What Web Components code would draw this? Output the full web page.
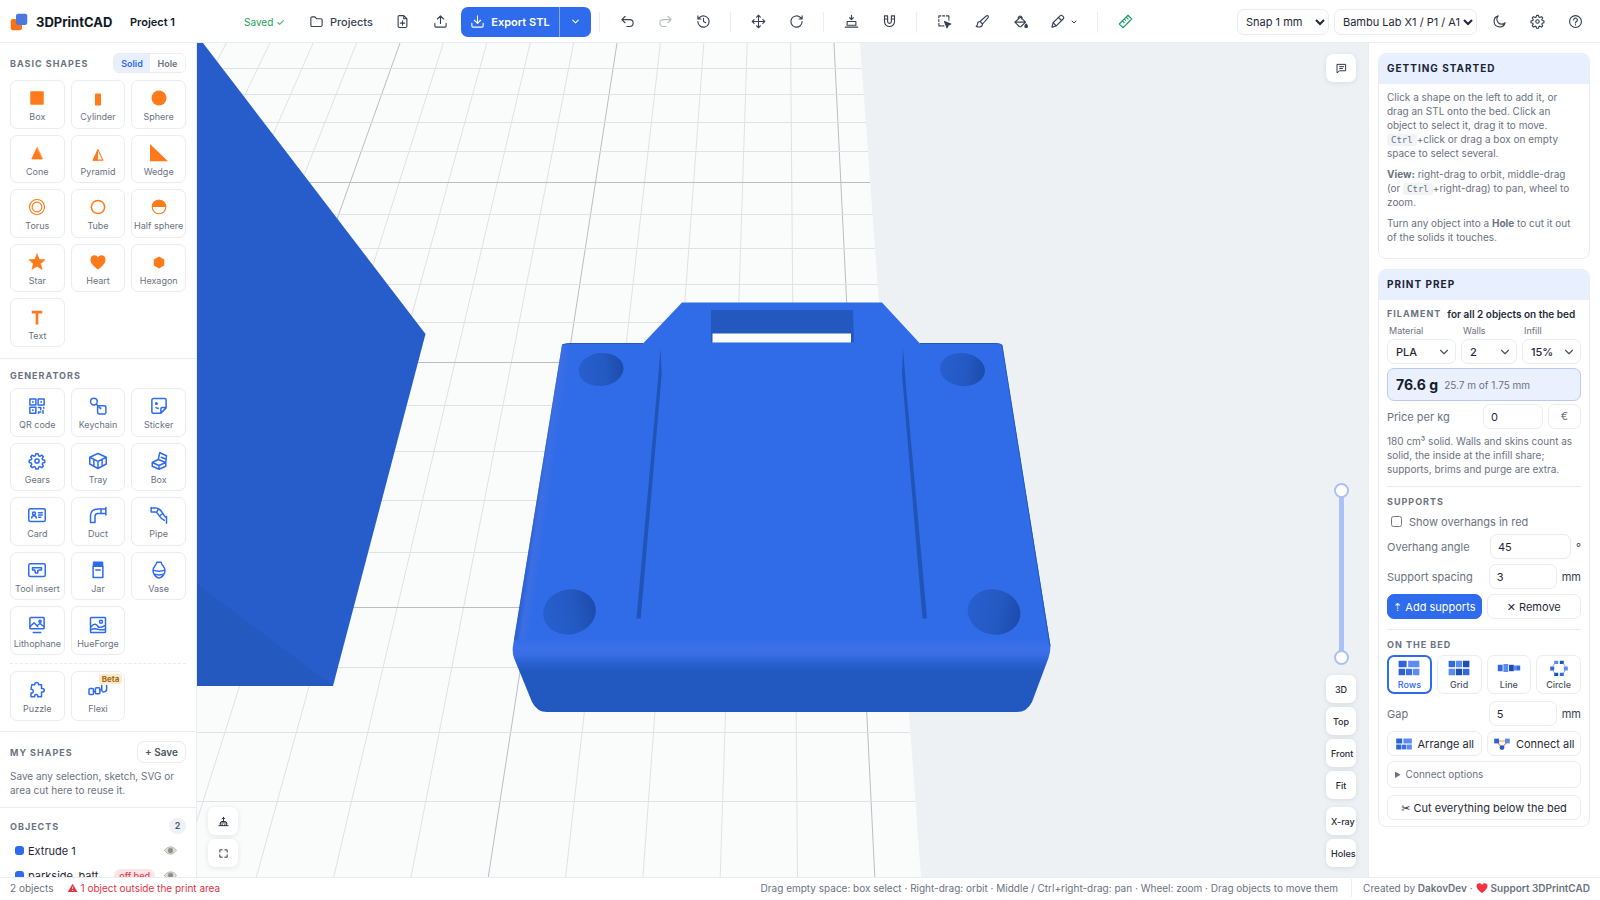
<!DOCTYPE html>
<html lang="en">
<head>
<meta charset="utf-8">
<title>3DPrintCAD</title>
<style>
html,body{margin:0;height:100%}
body{font-family:Inter,"DejaVu Sans",sans-serif;font-size:11px;color:#1f2937;background:#fff;overflow:hidden;
 --accent:#2f6bed;--line:#e9ecf1;--muted:#6b7280;--soft:#e8effe;--orange:#ff7a1a}
</style>
</head>
<body>
<cad-app></cad-app>
<script>
const ICONS={
folder:'<path d="M3 6.500a2 2 0 0 1 2-2h4.500l2.500 3H19a2 2 0 0 1 2 2V18a2 2 0 0 1-2 2H5a2 2 0 0 1-2-2z"/>',
fileplus:'<path d="M14 2.500H7a2 2 0 0 0-2 2v15a2 2 0 0 0 2 2h10a2 2 0 0 0 2-2v-12z M14 2.500v5h5 M12 11v7 M8.500 14.500h7"/>',
upload:'<path d="M12 15V3 M7 8l5-5 5 5 M3 15v4a2 2 0 0 0 2 2h14a2 2 0 0 0 2-2v-4"/>',
download:'<path d="M12 3v12 M7 10l5 5 5-5 M3 15v4a2 2 0 0 0 2 2h14a2 2 0 0 0 2-2v-4"/>',
chevron:'<path d="M6 9l6 6 6-6"/>',
undo:'<path d="M8 14L3 9l5-5 M3 9h12.500a5.500 5.500 0 0 1 0 11H11"/>',
redo:'<path d="M16 14l5-5-5-5 M21 9H8.500a5.500 5.500 0 0 0 0 11H13"/>',
history:'<path d="M3 12a9 9 0 1 0 2.700-6.400L3 8 M3 3v5h5 M12 7v5l3.500 2"/>',
move:'<path d="M12 2v20 M2 12h20 M9 5l3-3 3 3 M9 19l3 3 3-3 M5 9l-3 3 3 3 M19 9l3 3-3 3"/>',
rotate:'<path d="M21 12a9 9 0 1 1-2.700-6.400L21 8 M21 3v5h-5"/>',
place:'<path d="M2 21h20 M5 12h14v6H5z M12 2v7 M9 6l3 3 3-3"/>',
magnet:'<path d="M4 3h5v9a3 3 0 0 0 6 0V3h5v9a8 8 0 0 1-16 0z M4 8h5 M15 8h5"/>',
select:'<path d="M3 6V3h3 M9 3h3 M15 3h4v4 M19 9v1 M3 9v3 M3 15v4h4 M9 19h2"/><path d="M12 12l10 4-4 2-2 4z" fill="currentColor"/>',
brush:'<path d="M21 3c1 1 0 3-1 4l-8 9-4-4 9-8c1-1 3-2 4-1z M8 12c-3 0-4 2-4 4s-1 3-2 4c3 1 10 2 10-4"/>',
bucket:'<path d="M3 13L12 5l8 8-7 7a2 2 0 0 1-3 0z M4 13h15 M9 8a3 3 0 1 1 5 0"/><path d="M21 16s2 2 2 4a2 2 0 0 1-4 0c0-2 2-4 2-4z" fill="currentColor"/>',
pen:'<path d="M3 21l2-7L16 3a2.500 2.500 0 0 1 4 0l1 1a2.500 2.500 0 0 1 0 4L10 19z M14 6l4 4 M5 14l5 5"/>',
ruler:'<path d="M16 2l6 6L8 22l-6-6z M13 5l3 3 M10 8l2 2 M7 11l3 3"/>',
moon:'<path d="M21 14a9 9 0 1 1-11-11 7.500 7.500 0 0 0 11 11z"/>',
gear:'<path d="M9.800 5l.700-2.800h3l.700 2.800 1.600.700 2.500-1.500 2.100 2.100-1.500 2.500.700 1.600 2.700.600v3l-2.700.700-.700 1.600 1.500 2.500-2.100 2.100-2.500-1.500-1.600.700-.700 2.700h-3l-.700-2.700-1.600-.700-2.500 1.500-2.100-2.100 1.500-2.500-.700-1.600-2.800-.700v-3l2.800-.600.700-1.600-1.500-2.500 2.100-2.100 2.500 1.500z"/><circle cx="12" cy="12" r="2.800"/>',
help:'<circle cx="12" cy="12" r="9.500"/><path d="M9 9.500a3 3 0 1 1 4.300 2.700c-1 .500-1.300 1-1.300 2 M12 17v.500"/>',
chat:'<path d="M3 3h18v14H8l-5 4z M8 8h9 M8 12h6"/>',
place2:'<path d="M2 21h20 M5 21v-6h14v6 M5 15l2-3h10l2 3 M12 12V3 M9 6l3-3 3 3 M9 21v-3 M15 21v-3"/>',
full:'<path d="M4 9V4h5 M15 4h5v5 M20 15v5h-5 M9 20H4v-5"/>',
box:'<rect x="3" y="3" width="18" height="18" rx="1.500" fill="currentColor" stroke="none"/>',
cylinder:'<rect x="8" y="6" width="8" height="16" rx="1" fill="currentColor" stroke="none"/>',
sphere:'<circle cx="12" cy="12" r="10" fill="currentColor" stroke="none"/>',
cone:'<path d="M12 5L5 20h14z" fill="currentColor" stroke-width="1"/>',
pyramid:'<path d="M12 7.500L5.500 21.500h13z" stroke-width="1.500"/><path d="M12 7L5 22h7z" fill="currentColor" stroke="none"/>',
wedge:'<path d="M0 0v23h24z" fill="currentColor" stroke="none"/>',
torus:'<circle cx="12" cy="12" r="10" stroke-width="1.500"/><circle cx="12" cy="12" r="6.500" stroke-width="1.500"/>',
tube:'<circle cx="12" cy="12" r="8.800"/>',
half:'<circle cx="12" cy="12" r="9" stroke-width="1.500"/><path d="M2.300 12a9.700 9.700 0 0 1 19.400 0z" fill="currentColor" stroke="none"/>',
star:'<path d="M12 1.500l3 7.300 7.500.200-5.800 5.300 2.100 7.500L12 17.700l-6.800 4.100 2.100-7.500L1.500 9l7.500-.200z" fill="currentColor" stroke-width="1"/>',
heart:'<path d="M12 22C5 17 2 13 2 9 2 2 10 1.500 12 6c2-4.500 10-4 10 3 0 4-3 8-10 13z" fill="currentColor" stroke="none"/>',
hexagon:'<path d="M12 4.500l7 4v8l-7 4-7-4v-8z" fill="currentColor" stroke="none"/>',
text:'<path d="M5 5.500h14 M12 5.500V22" stroke-width="3.500" stroke-linecap="butt"/>',
qr:'<path d="M2.500 2.500h8v8h-8z M13.500 2.500h8v8h-8z M2.500 13.500h8v8h-8z M14 14h3v3 M21 14v1 M17 20h-3v1.500 M20 18v3.500 M6.500 6v1 M17.500 6v1 M6.500 17v1"/>',
keychain:'<circle cx="6.500" cy="6" r="4.500"/><rect x="11.500" y="11.500" width="11" height="11" rx="2"/><path d="M9.700 9.700l5.300 5.300 M15.500 14.500v1"/>',
sticker:'<path d="M4.500 2h15a2 2 0 0 1 2 2v10.500l-7 7h-10a2 2 0 0 1-2-2V4a2 2 0 0 1 2-2z M21 14h-4.500a2 2 0 0 0-2 2v5 M8.500 8.500v.500 M8 14c1 1 2 1.300 3 1"/><circle cx="8.500" cy="8.700" r="1" fill="currentColor"/>',
tray:'<path d="M12 2l11 5-11 5.500L1 7z M1 7v9l11 6 11-6V7 M12 12.500V22 M6.500 10v9 M17.500 10v9"/>',
openbox:'<path d="M3 14l8-4 10 4-9 4z M3 14v5l9 4 9-4v-5 M12 18v5 M11 10l2-9 9 4-1 9 M15 7l5 2"/>',
card:'<rect x="1" y="3.500" width="22" height="17" rx="2"/><circle cx="8" cy="10" r="2"/><path d="M5 16c0-4 6-4 6 0 M14 9h5 M14 12h5 M14 15h3"/>',
duct:'<path d="M2 22V13C2 7 6 4 12 4h10 M8 22v-8c0-3 2-4 4-4h10 M2 22h6 M22.500 2v10 M16 4v6"/>',
pipe:'<path d="M1.500 2v6 M1.500 2.500h6c9 0 8 9 14 13 M2 8h5c5 0 5 9 12 11 M22 14v9 M11 4l-2 4 M17 10l-4 3"/>',
insert:'<rect x="1" y="3.500" width="22" height="17" rx="2"/><path d="M6 9h12v3h-3l-2 1v3h-3l-1-4H6z"/>',
jar:'<path d="M6 1.500h12V7H6z" fill="currentColor"/><path d="M5.500 7h13v15h-13z M9 12h6"/>',
vase:'<path d="M9 1.500h6c0 4 5 6 5 11s-4 10-8 10-8-5-8-10 5-7 5-11z M4.500 12c3 2 12 2 15 0 M5.500 17c3 2 10 2 13 0"/>',
litho:'<rect x="2.500" y="2" width="19" height="15" rx="1"/><path d="M3 14l5-5 5 5 M12 13l4-3 5 4 M7 22h10"/><circle cx="16" cy="7" r="1.500"/>',
hue:'<rect x="2" y="2" width="20" height="20" rx="1"/><path d="M3 14c4-5 7-3 9 0s6 0 9-1 M3 18c6-3 10 2 18 0"/><circle cx="16" cy="7.500" r="2"/>',
puzzle:'<path d="M5 5h4c-1-4 6-4 5 0h4v5c5-1 5 5 0 5v6h-5c1-4-5-4-4 0H4v-5c4 1 4-5 0-5z"/>',
flexi:'<rect x="0" y="10" width="6" height="8" rx="1.500"/><rect x="8.500" y="9" width="6" height="8" rx="1.500"/><path d="M17 6v6c0 4 6.500 3 6.500-1V6 M6 14h2.500 M14.500 12H17"/>',
eye:'<path d="M1 12c5-9 17-9 22 0-5 9-17 9-22 0z" fill="#deded8" stroke="#b0b1ad" stroke-width="1.500"/><circle cx="12" cy="12" r="4" fill="#8b8c88" stroke="#9a988f"/>',
love:'<path d="M12 22C4 16 1 12 1 8 1 1 10 1 12 6c2-5 11-5 11 2 0 4-3 8-11 14z" fill="#ef3340" stroke="none"/>',
logo:'<rect x="1" y="8" width="15" height="15" rx="3" fill="#f97316" stroke="none"/><rect x="8" y="1" width="15" height="15" rx="3" fill="#4a78e0" stroke="none"/>'
};
const BASE='*{box-sizing:border-box}button,input,select{font:inherit;color:inherit;margin:0}button{cursor:pointer}h2,h3,p{margin:0;font:inherit}';
// init fills the cloned fragment before it is attached, so nested elements see their attributes.
function define(name,html,init){
  const t=document.createElement('template');
  t.innerHTML='<style>'+BASE+'</style>'+html;
  customElements.define(name,class extends HTMLElement{
    connectedCallback(){
      if(this.shadowRoot)return;
      const f=t.content.cloneNode(true);
      if(init)init.call(this,f);
      this.attachShadow({mode:'open'}).append(f);
    }
  });
}
define('cad-icon','<style>:host{display:inline-flex;width:var(--s,16px);height:var(--s,16px);flex:none}svg{width:100%;height:100%;fill:none;stroke:currentColor;stroke-width:var(--w,2);stroke-linecap:round;stroke-linejoin:round;overflow:visible}</style><svg viewBox="0 0 24 24" aria-hidden="true"></svg>',
 function(r){r.querySelector('svg').innerHTML=ICONS[this.getAttribute('name')]});

define('tool-button',`<style>:host{display:block}button{width:38px;height:30px;display:grid;place-items:center;border:0;background:none;color:inherit;padding:0;border-radius:6px}:host([faded]) button{opacity:.35}</style><button><cad-icon></cad-icon></button>`,
 function(r){r.querySelector('cad-icon').setAttribute('name',this.getAttribute('icon'));r.querySelector('button').setAttribute('aria-label',this.getAttribute('label'))});

define('top-bar',`<style>
:host{display:flex;align-items:center;height:43px;box-sizing:border-box;border-bottom:1px solid var(--line);padding:1px 6px 0 10px;color:#374151;--s:15px;--w:1.8}
.brand{display:flex;align-items:center;gap:8px;width:109px;font-weight:700;font-size:13px;color:#111827;--s:18px}
input{border:0;background:none;font-weight:600;font-size:11px;color:#111827;width:96px;padding:0;margin:0 18px 0 11px;outline:0}
.saved{font-size:10px;color:#22a157;width:57px}
.proj{display:flex;align-items:center;gap:6px;border:0;background:none;padding:0 8px;width:82px;height:30px;font-size:11px;font-weight:500}
.export{display:flex;height:30px;border-radius:7px;overflow:hidden;background:var(--accent);color:#fff;margin-left:2px}
.export button{border:0;background:none;color:#fff;display:flex;align-items:center;justify-content:center;padding:0}
.export button:first-child{width:99px;gap:6px;font-weight:600;font-size:11px;border-right:1px solid #84a9f5}
.export button:last-child{width:31px;--s:11px;--w:2.500}
i{width:1px;height:20px;background:var(--line);margin:0 8px;flex:none}
.pen{display:flex;align-items:center;justify-content:center;width:50px;height:30px;gap:5px;border:0;background:none;padding:0}
.pen cad-icon:last-child{--s:8px;--w:3}
.right{margin-left:auto;display:flex;align-items:center}
select{height:26px;border:1px solid var(--line);border-radius:7px;background:#fff;color:#1f2937;font-size:11px;padding:0 0 0 4px;margin-right:5px}
.snap{width:92px}.printer{width:143px;margin-right:3px}
.ruler{color:#22a06b}
</style>
<div class="brand"><cad-icon name="logo"></cad-icon><span>3DPrintCAD</span></div>
<input aria-label="Project name" value="Project 1">
<span class="saved">Saved ✓</span>
<button class="proj"><cad-icon name="folder"></cad-icon>Projects</button>
<tool-button icon="fileplus" label="New project"></tool-button>
<tool-button icon="upload" label="Import"></tool-button>
<div class="export"><button><cad-icon name="download"></cad-icon>Export STL</button><button aria-label="Export options"><cad-icon name="chevron"></cad-icon></button></div>
<i></i><tool-button icon="undo" label="Undo"></tool-button><tool-button icon="redo" label="Redo" faded></tool-button><tool-button icon="history" label="History"></tool-button>
<i></i><tool-button icon="move" label="Move"></tool-button><tool-button icon="rotate" label="Rotate"></tool-button>
<i></i><tool-button icon="place" label="Place on bed"></tool-button><tool-button icon="magnet" label="Snap faces"></tool-button>
<i></i><tool-button icon="select" label="Select area"></tool-button><tool-button icon="brush" label="Paint"></tool-button><tool-button icon="bucket" label="Fill"></tool-button>
<button class="pen" aria-label="Sketch"><cad-icon name="pen"></cad-icon><cad-icon name="chevron"></cad-icon></button>
<i></i><tool-button class="ruler" icon="ruler" label="Measure"></tool-button>
<div class="right"><select class="snap" aria-label="Snap"><option>Snap 1 mm</option></select><select class="printer" aria-label="Printer"><option>Bambu Lab X1 / P1 / A1</option></select>
<tool-button icon="moon" label="Dark mode"></tool-button><tool-button icon="gear" label="Settings"></tool-button><tool-button icon="help" label="Help"></tool-button></div>`);

define('shape-tile',`<style>:host{display:block;position:relative;min-width:0}button{width:100%;height:100%;border:1px solid var(--line);border-radius:7px;background:#fff;padding:4px 0 0;display:flex;flex-direction:column;align-items:center;justify-content:center;gap:4px;font-size:9px;line-height:12px;color:var(--muted);white-space:nowrap}
cad-icon{color:var(--tile-color);--s:18px}
b{position:absolute;top:3px;right:3px;font-size:8px;line-height:10px;padding:0 3px;background:#fdebc8;color:#a8671c;border-radius:3px}b:empty{display:none}</style>
<button><cad-icon></cad-icon><span><slot></slot></span></button><b></b>`,
 function(r){r.querySelector('cad-icon').setAttribute('name',this.getAttribute('icon'));r.querySelector('b').textContent=this.getAttribute('badge')||''});

define('panel-section',`<style>:host{display:block;padding:10px 10px 0;border-bottom:1px solid var(--line)}header{display:flex;align-items:center;justify-content:space-between;height:20px}h2{font-size:9px;font-weight:700;letter-spacing:1px;color:var(--muted);white-space:nowrap}</style>
<header><h2></h2><slot name="action"></slot></header><slot></slot>`,function(r){r.querySelector('h2').textContent=this.getAttribute('heading')});

define('object-row',`<style>:host{display:flex;align-items:center;height:25px;padding:0 9px 0 5px;font-size:11px;color:#1f2937}
i{width:9px;height:9px;border-radius:3px;background:var(--accent);margin-right:4px}span{flex:1;width:0;overflow:hidden;text-overflow:clip;white-space:nowrap}
em{font-style:normal;font-size:9px;font-weight:500;color:#dc3a4c;background:#fde5e7;border-radius:8px;padding:1px 5px;margin:0 9px 0 15px}em:empty{display:none}button{border:0;background:none;padding:0;--s:13px;display:flex}</style>
<i></i><span><slot></slot></span><em></em><button aria-label="Toggle visibility"><cad-icon name="eye"></cad-icon></button>`,
 function(r){r.querySelector('em').textContent=this.getAttribute('note')||''});

const tiles=s=>s.split(',').map(x=>{const[i,n,b]=x.split(':');return `<shape-tile icon="${i}"${b?` badge="${b}"`:''}>${n}</shape-tile>`}).join('');
define('shape-panel',`<style>
:host{display:block;box-sizing:border-box;width:197px;border-right:1px solid var(--line);overflow:hidden;background:#fff}
.grid{display:grid;grid-template-columns:repeat(3,1fr);grid-auto-rows:1fr;gap:6px;height:267px;margin:7px 0 11px}
.basic{--tile-color:var(--orange)}.gen{--tile-color:var(--accent);padding-top:6px}
.gen .grid{margin:3px 0 8px}
.gen .grid.more{height:50px;margin:0 0 10px}
hr{border:0;border-top:1px dashed var(--line);margin:0 0 7px}
.seg{display:flex;height:20px;border:1px solid var(--line);border-radius:6px;overflow:hidden}
.seg button{border:0;background:#fff;font-size:9px;font-weight:600;color:var(--muted);width:35px;padding:0}
.seg button:first-child{background:var(--soft);color:var(--accent);width:36px}
.save{height:22px;width:49px;padding:0;border:1px solid var(--line);border-radius:7px;background:#fff;font-size:10px;font-weight:600;color:#4b5563}
p{font-size:10px;line-height:14px;color:var(--muted);padding:7px 0 10px;white-space:nowrap}
.count{font-size:9px;font-weight:600;background:#eef2f8;color:#4b5563;width:17px;line-height:16px;border-radius:8px;text-align:center}
.objects{border:0;padding-top:8px}
.rows{padding-top:2px}
</style>
<panel-section class="basic" heading="BASIC SHAPES"><div class="seg" slot="action"><button>Solid</button><button>Hole</button></div>
<div class="grid">${tiles('box:Box,cylinder:Cylinder,sphere:Sphere,cone:Cone,pyramid:Pyramid,wedge:Wedge,torus:Torus,tube:Tube,half:Half sphere,star:Star,heart:Heart,hexagon:Hexagon,text:Text')}</div></panel-section>
<panel-section class="gen" heading="GENERATORS">
<div class="grid">${tiles('qr:QR code,keychain:Keychain,sticker:Sticker,gear:Gears,tray:Tray,openbox:Box,card:Card,duct:Duct,pipe:Pipe,insert:Tool insert,jar:Jar,vase:Vase,litho:Lithophane,hue:HueForge')}</div><hr>
<div class="grid more">${tiles('puzzle:Puzzle,flexi:Flexi:Beta')}</div></panel-section>
<panel-section heading="MY SHAPES"><button class="save" slot="action">+ Save</button>
<p>Save any selection, sketch, SVG or<br>area cut here to reuse it.</p></panel-section>
<panel-section class="objects" heading="OBJECTS"><span class="count" slot="action">2</span>
<div class="rows"><object-row>Extrude 1</object-row><object-row note="off bed">parkside_batt</object-row></div></panel-section>`);

let grid='';
for(let k=-15;k<=0;k++)grid+=`<path class="${k%5?'':'m'}" d="M${834+43.4*k} 43L${874.8+77.3*k} 877"/>`;
[68,94,122,151,182,214,248,284,322,362,405,451,500,552,607,667,732,801].forEach((y,n)=>{grid+=`<path class="${n%5==4?'m':''}" d="M190 ${y+.5}H${Math.round(860+(y-43)*61/834)}"/>`});
define('float-button',`<style>:host{display:block}button{width:30px;height:28px;border:0;border-radius:7px;background:#fff;box-shadow:0 1px 5px #1f29371a;padding:0;display:grid;place-items:center;font-size:9px;font-weight:500;color:#1f2937;--s:11px}:host([wide]) button{justify-content:start;padding-left:5px;white-space:nowrap}</style><button><slot></slot></button>`);
define('bed-view',`<style>
:host{display:block;position:relative;flex:1;min-width:0;background:#edf1f4;overflow:hidden}
.scene{display:block;width:100%;height:100%}
.g path{stroke:#dfe2e4;stroke-width:1;fill:none}.g .m{stroke:#babec1}
.tr,.bl,.br{position:absolute;display:flex;flex-direction:column;gap:4px}
.tr{top:11px;right:12px}.bl{left:11px;bottom:10px}.br{right:12px;bottom:10px;align-items:flex-end}
.br .gap{margin-top:4px}
.range{position:relative;width:14px;height:182px;margin:0 8px 6px 0}
.range::before{content:"";position:absolute;left:5px;top:8px;bottom:8px;width:5px;background:#abc3f4}
.range input{position:absolute;inset:0;width:14px;height:182px;writing-mode:vertical-lr;direction:rtl;appearance:none;background:none;pointer-events:none}
.range input::-webkit-slider-thumb{appearance:none;width:15px;height:15px;border-radius:50%;background:#fff;border:2px solid #a9c0f2;pointer-events:auto}
</style>
<svg class="scene" viewBox="197 43 1171 834" preserveAspectRatio="xMidYMid slice" role="img" aria-label="Print bed with two blue parts">
<defs><linearGradient id="h"><stop offset="0" stop-color="#275fce"/><stop offset=".600" stop-color="#2459c2"/><stop offset="1" stop-color="#1c4baa"/></linearGradient>
<linearGradient id="f" x1="0" y1="302" x2="0" y2="712" gradientUnits="userSpaceOnUse"><stop offset="0" stop-color="#306ce7"/><stop offset=".820" stop-color="#306ce7"/><stop offset=".845" stop-color="#3e70e8"/><stop offset=".860" stop-color="#396de5"/><stop offset=".880" stop-color="#2a61d2"/><stop offset=".900" stop-color="#2259c1"/><stop offset="1" stop-color="#2259c1"/></linearGradient>
<linearGradient id="e" x1="535" y1="500" x2="549" y2="502" gradientUnits="userSpaceOnUse"><stop offset="0" stop-color="#285bc6"/><stop offset=".400" stop-color="#426fe2"/><stop offset="1" stop-color="#306ce7"/></linearGradient></defs>
<path d="M190 43H860L921 877H190z" fill="#fafbfb"/>
<g class="g">${grid}</g>
<path d="M197 43h6l222.500 291L333 686H197z" fill="#265dca"/><path d="M197 584L325 680l8 6H197z" fill="#2459c0"/>
<path d="M682 302.500h200l38 41h76q4 0 6 1.500L1050.500 646q0 6-2 12L1032 702q-5 10-15 10H547q-10 0-15-10L514 658q-2-6-1-12L562 345q3-1.500 8-1.500h73z" fill="url(#f)"/>
<path d="M562 345q3-1 14 0L528 640l-14 0z" fill="url(#e)" opacity=".7"/>
<path d="M562 345q3-1.500 8-1.500h73 M920 343.500h76q4 0 6 1.500L1050 646" fill="none" stroke="#2358bd"/>
<path d="M711 310h142l1 32.500H711z" fill="#2358bf"/><path d="M712.500 333.500h138.500v9H712.500z" fill="#fcfdfd"/>
<g fill="url(#h)"><ellipse cx="601" cy="369.500" rx="22.500" ry="16.500" transform="rotate(-6 601 369)"/><ellipse cx="962.500" cy="369.500" rx="22.500" ry="16.500" transform="rotate(6 962 369)"/><ellipse cx="569.500" cy="612" rx="26.500" ry="22.500" transform="rotate(-12 569 612)"/><ellipse cx="994" cy="612" rx="26.500" ry="22.500" transform="rotate(12 994 612)"/></g>
<path d="M660.500 348l1.200 26-21 244.500h-4.200L658.500 374z M903 348l3 38 21 232.500h-4.500L902 374z" fill="#2054b6"/>
</svg>
<div class="tr"><float-button aria-label="Comments"><cad-icon name="chat"></cad-icon></float-button></div>
<div class="bl"><float-button><cad-icon name="place2"></cad-icon></float-button><float-button><cad-icon name="full"></cad-icon></float-button></div>
<div class="br"><div class="range"><input type="range" aria-label="Lower layer" value="0"><input type="range" aria-label="Upper layer" value="100"></div>
<float-button>3D</float-button><float-button>Top</float-button><float-button wide>Front</float-button><float-button>Fit</float-button><float-button wide class="gap">X-ray</float-button><float-button wide>Holes</float-button></div>`);

define('side-card',`<style>:host{display:block;border:1px solid var(--line);border-radius:8px;overflow:hidden;background:#fff}h2{background:var(--soft);height:30px;line-height:28px;padding:0 8px;font-size:10px;font-weight:700;letter-spacing:1px;color:#1b2436}.body{padding:0 8px 6px}</style><h2></h2><div class="body"><slot></slot></div>`,
 function(r){r.querySelector('h2').textContent=this.getAttribute('heading')});

define('select-field',`<style>:host{display:block}label{display:block;font-size:9px;line-height:12px;color:var(--muted)}span{padding-left:2px}.w{display:grid;align-items:center;margin-top:2px}select,cad-icon{grid-area:1/1}select{appearance:none;width:100%;height:25px;border:1px solid var(--line);border-radius:7px;background:#fff;padding:0 8px;font-size:11px;font-weight:500;color:#1f2937}cad-icon{justify-self:end;margin-right:5px;--s:14px;color:#4b5563;pointer-events:none}</style>
<label><span></span><div class="w"><select><option></option></select><cad-icon name="chevron"></cad-icon></div></label>`,
 function(r){r.querySelector('span').textContent=this.getAttribute('label');r.querySelector('option').textContent=this.getAttribute('value')});

define('number-row',`<style>:host{display:block;margin-bottom:5px}label{display:flex;align-items:center;gap:5px;height:25px;font-size:11px;color:var(--muted);white-space:nowrap}.n{flex:1}input{width:var(--iw,68px);height:25px;border:1px solid var(--line);border-radius:7px;padding:0 7px;background:#fff;color:#1f2937;outline:0}.u{color:#374151;text-align:right}:host([boxed]) .u{width:33px;text-align:center;border:1px solid var(--line);border-radius:7px;line-height:23px;color:var(--muted)}</style>
<label><span class="n"></span><input type="text" inputmode="decimal"><span class="u"></span></label>`,
 function(r){r.querySelector('.n').textContent=this.getAttribute('label');r.querySelector('input').setAttribute('value',this.getAttribute('value'));r.querySelector('.u').textContent=this.getAttribute('unit')});

define('text-button',`<style>:host{display:block;min-width:0}button{width:100%;height:25px;border:1px solid var(--line);border-radius:7px;background:#fff;color:#1f2937;font-size:11px;font-weight:400;padding:0;white-space:nowrap;display:flex;align-items:center;justify-content:center;gap:5px}:host([primary]) button{background:var(--accent);border-color:var(--accent);color:#fff}</style><button><slot></slot></button>`);

const ARR={
rows:'<path d="M2 1h10v8H2z M2 11h8v8H2z" fill="#2c63d6"/><path d="M14 1h14v8H14z M20 11h8v8h-8z" fill="#5c8cf0"/><path d="M11 11h8v8h-8z" fill="#3a70e0"/>',
grid:'<path d="M2 1h8v8H2z" fill="#2f6bdc"/><path d="M11 1h8v8h-8z M2 11h8v8H2z" fill="#5c8cf0"/><path d="M20 1h8v8h-8z M11 11h8v8h-8z" fill="#1d4fb4"/><path d="M20 11h8v8h-8z" fill="#2f6bdc"/>',
line:'<path d="M1 6h6v8H1z M24 7h5v6h-5z" fill="#2f6bdc"/><path d="M8 5h6v10H8z M21 7h3v6h-3z" fill="#5c8cf0"/><path d="M15 6h6v8h-6z" fill="#1d4fb4"/>',
circle:'<path d="M9 1h5v4H9z M21 8h5v5h-5z" fill="#5c8cf0"/><path d="M16 1h5v4h-5z M9 16h5v4H9z" fill="#1d4fb4"/><path d="M4 8h5v5H4z M16 16h5v4h-5z" fill="#2f6bdc"/><path d="M7 13l3 4 M20 17l3-4 M7 8l3-4 M20 4l3 4" stroke="#6b95ef"/>',
connect:'<path d="M6 5h18L15 17z" fill="none" stroke="#ff8a3c" stroke-width="2"/><path d="M2 1h8v8H2z" fill="#2c63d6"/><path d="M20 1h8v8h-8z" fill="#5c8cf0"/><circle cx="15" cy="16" r="4" fill="#2458c5"/>'};
define('arrange-art','<style>:host{display:flex;width:var(--aw,24px);height:var(--ah,16px)}svg{width:100%;height:100%}</style><svg viewBox="0 0 30 20" aria-hidden="true"></svg>',function(r){r.querySelector('svg').innerHTML=ARR[this.getAttribute('kind')]});
define('arrange-tile',`<style>:host{display:block}button{width:100%;height:39px;border:1px solid var(--line);border-radius:7px;background:#fff;padding:2px 0 0;display:flex;flex-direction:column;align-items:center;justify-content:center;gap:3px;font-size:9px;line-height:12px;font-weight:500;color:#4b5563}:host([on]) button{border:2px solid var(--accent);color:var(--accent)}</style><button><arrange-art></arrange-art><slot></slot></button>`,
 function(r){r.querySelector('arrange-art').setAttribute('kind',this.getAttribute('kind'))});

define('prep-panel',`<style>
:host{display:flex;box-sizing:border-box;flex-direction:column;gap:10px;width:232px;border-left:1px solid var(--line);padding:10px 10px 0 9px;overflow:hidden;background:#fff}
.help{padding:6px 0 1px}
.help p{font-size:10px;line-height:14px;color:var(--muted);margin-bottom:7px;white-space:nowrap}
kbd{font-family:"DejaVu Sans Mono","Liberation Mono",monospace;font-size:9px;line-height:10px;background:#f1f3f7;border-radius:3px;padding:1px 4px;margin:0}
.fil{display:flex;align-items:center;gap:6px;height:25px;padding-top:2px;font-size:10px;font-weight:600;color:#1f2937;white-space:nowrap}
h3{font-size:9px;font-weight:700;letter-spacing:1px;color:var(--muted);line-height:14px}
.three{display:grid;grid-template-columns:69px 56px 1fr;gap:5px}
.weight{height:33px;border:1px solid #b9c9f0;border-radius:7px;background:#eaf0fe;display:flex;align-items:center;gap:6px;padding:0 8px;margin:4px 0 3px;font-size:10px;color:var(--muted)}
.weight b{font-size:14px;color:#141c2c}
.note{font-size:10px;line-height:14px;color:var(--muted);white-space:nowrap}
hr{border:0;border-top:1px solid var(--line);margin:10px 0 8px}
.check{display:flex;align-items:center;gap:7px;font-size:11px;color:var(--muted);height:25px}
.check input{width:11px;height:11px;margin:0 0 0 4px}
.two{display:grid;grid-template-columns:1fr 1fr;gap:5px;--aw:18px;--ah:12px}
.four{display:grid;grid-template-columns:repeat(4,1fr);gap:5px;margin:3px 0 7px}
details{border:1px solid var(--line);border-radius:7px;margin:5px 0 7px;height:27px;line-height:25px;padding:0 7px;font-size:10px;color:var(--muted)}
</style>
<side-card heading="GETTING STARTED"><div class="help">
<p>Click a shape on the left to add it, or<br>drag an STL onto the bed. Click an<br>object to select it, drag it to move.<br><kbd>Ctrl</kbd>+click or drag a box on empty<br>space to select several.</p>
<p><b>View:</b> right-drag to orbit, middle-drag<br>(or <kbd>Ctrl</kbd>+right-drag) to pan, wheel to<br>zoom.</p>
<p>Turn any object into a <b>Hole</b> to cut it out<br>of the solids it touches.</p></div></side-card>
<side-card heading="PRINT PREP">
<div class="fil"><h3>FILAMENT</h3><span>for all 2 objects on the bed</span></div>
<div class="three"><select-field label="Material" value="PLA"></select-field><select-field label="Walls" value="2"></select-field><select-field label="Infill" value="15%"></select-field></div>
<div class="weight"><b>76.6 g</b><span>25.7 m of 1.75 mm</span></div>
<number-row boxed label="Price per kg" value="0" unit="€" style="--iw:60px"></number-row>
<p class="note">180 cm³ solid. Walls and skins count as<br>solid, the inside at the infill share;<br>supports, brims and purge are extra.</p>
<hr><h3>SUPPORTS</h3>
<label class="check"><input type="checkbox">Show overhangs in red</label>
<number-row label="Overhang angle" value="45" unit="°" style="--iw:81px"></number-row>
<number-row label="Support spacing" value="3" unit="mm"></number-row>
<div class="two"><text-button primary>⇡ Add supports</text-button><text-button>✕ Remove</text-button></div>
<hr><h3>ON THE BED</h3>
<div class="four"><arrange-tile kind="rows" on>Rows</arrange-tile><arrange-tile kind="grid">Grid</arrange-tile><arrange-tile kind="line">Line</arrange-tile><arrange-tile kind="circle">Circle</arrange-tile></div>
<number-row label="Gap" value="5" unit="mm"></number-row>
<div class="two"><text-button><arrange-art kind="rows"></arrange-art>Arrange all</text-button><text-button><arrange-art kind="connect"></arrange-art>Connect all</text-button></div>
<details><summary>Connect options</summary></details>
<text-button>✂ Cut everything below the bed</text-button>
</side-card>`);

define('status-bar',`<style>:host{display:flex;box-sizing:border-box;align-items:center;height:23px;border-top:1px solid var(--line);padding:0 10px 2px;font-size:10px;color:var(--muted);white-space:nowrap;background:#fff}
.warn{color:#e0343f;margin-left:14px}.hint{margin-left:auto}.credit{border-left:1px solid var(--line);margin-left:13px;padding-left:11px;height:18px;display:flex;align-items:center;gap:3px;--s:12px}a{color:inherit;text-decoration:none;font-weight:600}</style>
<span>2 objects</span><span class="warn">⚠ 1 object outside the print area</span>
<span class="hint">Drag empty space: box select · Right-drag: orbit · Middle / Ctrl+right-drag: pan · Wheel: zoom · Drag objects to move them</span>
<div class="credit"><span>Created by <a href="#dakov">DakovDev</a> ·</span><cad-icon name="love"></cad-icon><a href="#support">Support 3DPrintCAD</a></div>`);

define('cad-app',`<style>:host{display:flex;flex-direction:column;height:100vh}main{flex:1;min-height:0;display:flex}shape-panel,prep-panel{flex:none}</style>
<top-bar></top-bar><main><shape-panel></shape-panel><bed-view></bed-view><prep-panel></prep-panel></main><status-bar></status-bar>`);
</script>
</body>
</html>
